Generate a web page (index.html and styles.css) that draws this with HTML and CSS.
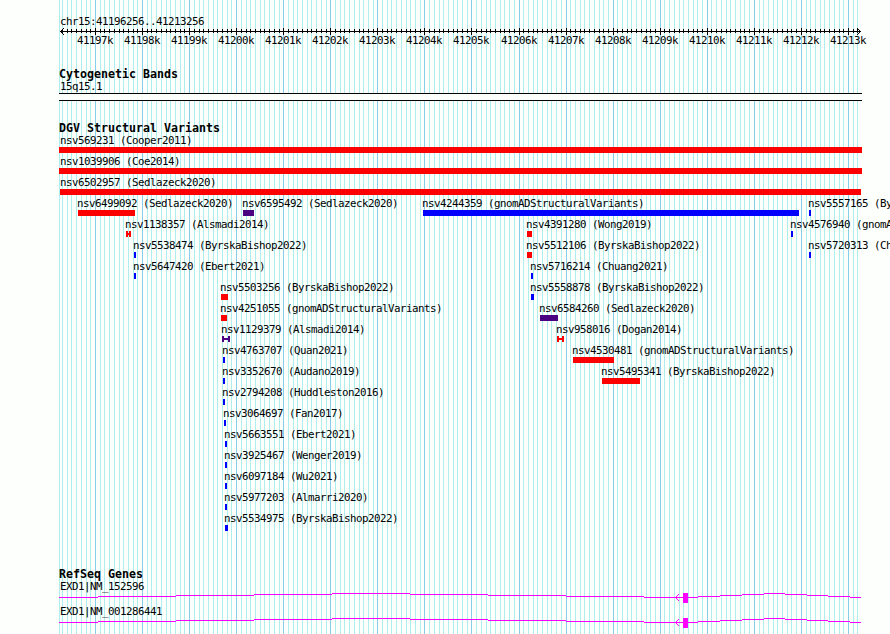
FILE: index.html
```html
<!DOCTYPE html>
<html lang="en">
<head>
<meta charset="utf-8">
<title>chr15:41196256..41213256</title>
<link rel="stylesheet" href="styles.css">
</head>
<body>
<main class="browser">
  <svg class="gridlines" width="890" height="634" shape-rendering="crispEdges" aria-hidden="true"></svg>
  <header class="ruler">
    <div class="region">chr15:41196256..41213256</div>
    <svg class="axis" width="890" height="7" shape-rendering="crispEdges"></svg>
    <div class="ticks"></div>
  </header>
  <section class="track cyto">
    <h2>Cytogenetic Bands</h2>
    <div class="name">15q15.1</div>
    <div class="band"></div>
  </section>
  <section class="track variants">
    <h2>DGV Structural Variants</h2>
    <div class="rows"></div>
  </section>
  <section class="track genes">
    <h2>RefSeq Genes</h2>
    <div class="gene"><div class="name">EXD1|NM_152596</div><svg class="transcript" width="890" height="12" shape-rendering="crispEdges"></svg></div>
    <div class="gene"><div class="name">EXD1|NM_001286441</div><svg class="transcript" width="890" height="12" shape-rendering="crispEdges"></svg></div>
  </section>
</main>
<script src="tracks.js"></script>
</body>
</html>
```
FILE: styles.css
```css
* { box-sizing: border-box; }
body {
  margin: 0;
  background: #fdfffc;
  color: #000;
  font-family: "DejaVu Sans Mono", "Liberation Mono", monospace;
  font-size: 10.8px;
  line-height: 13px;
  letter-spacing: -0.502px;
}
.browser {
  display: grid;
  grid-template-rows: 68px 54px 446px 66px;
  width: 890px;
  height: 634px;
  overflow: hidden;
}
.gridlines { position: absolute; top: 0; left: 0; z-index: -1; }
.minor { fill: #afeeee; }
.major { fill: #87ceeb; }
svg { display: block; }
.ruler { padding-top: 15px; }
.region, .name { padding-left: 60px; white-space: pre; height: 13px; }
.axis { fill: #000; }
.ticks { display: grid; margin-top: -1px; }
.ticks span {
  grid-area: 1 / 1;
  width: 36px;
  margin-left: var(--x);
  white-space: nowrap;
}
h2 {
  margin: 0;
  padding-left: 59px;
  height: 12px;
  font-size: 11.63px;
  line-height: 13px;
  letter-spacing: 0;
  font-weight: bold;
}
.cyto .band {
  height: 8px;
  width: 803px;
  margin-left: 59px;
  background: #fdfffc;
  border-top: 1px solid #000;
  border-bottom: 1px solid #000;
}
.row { display: grid; height: 21px; }
.feature {
  grid-area: 1 / 1;
  margin-left: var(--x);
  display: flex;
  flex-direction: column;
  min-width: 0;
}
.feature .label { height: 13px; margin-left: -1px; white-space: pre; }
.feature.edge .label { margin-left: 1px; }
.feature.start .label { margin-left: 0; }
.bar { width: var(--w); height: 6px; background: currentColor; }
.loss { color: #f00; }
.gain { color: #00f; }
.both { color: #4b0082; }
.span {
  background: linear-gradient(currentColor, currentColor) 0 50% / 100% 2px no-repeat;
  border-left: 2px solid;
  border-right: 2px solid;
}
.gene { height: 25px; }
.gene .name { height: 12px; }
.transcript { fill: #f0f; }
```
FILE: tracks.js
```js
const START = 41196.256;
const SCALE = 800 / 17;
const toX = k => Math.round(60 + (k - START) * SCALE);
const rect = (x, y, w, h, c) =>
  `<rect x="${x}" y="${y}" width="${w}" height="${h}"${c ? ` class="${c}"` : ''}/>`;

let grid = rect(59, 0, 1, 634, 'minor');
let axis = rect(60, 3, 801, 1);
let labels = '';
for (let i = 411963; i <= 412132; i++) {
  const x = toX(i / 10);
  const major = i % 10 === 0;
  grid += rect(x, 0, 1, 634, major ? 'major' : 'minor');
  axis += major ? rect(x, 0, 1, 7) : rect(x, 1, 1, 4);
  if (major) labels += `<span style="--x:${x - 18}px">${i / 10}k</span>`;
}
for (let d = 1; d <= 3; d++) {
  axis += rect(60 + d, 3 - d, 1, 1) + rect(60 + d, 3 + d, 1, 1);
  axis += rect(860 - d, 3 - d, 1, 1) + rect(860 - d, 3 + d, 1, 1);
}
document.querySelector('.gridlines').innerHTML = grid;
document.querySelector('.axis').innerHTML = axis;
document.querySelector('.ticks').innerHTML = labels;

// Each feature: left, width, kind, label, optional modifiers
const rows = [
  [[59, 803, 'loss', 'nsv569231 (Cooper2011)', 'edge']],
  [[59, 803, 'loss', 'nsv1039906 (Coe2014)', 'edge']],
  [[60, 801, 'loss', 'nsv6502957 (Sedlazeck2020)', 'start']],
  [[78, 57, 'loss', 'nsv6499092 (Sedlazeck2020)'], [243, 11, 'both', 'nsv6595492 (Sedlazeck2020)'],
   [423, 376, 'gain', 'nsv4244359 (gnomADStructuralVariants)'], [809, 2, 'gain', 'nsv5557165 (ByrskaBishop2022)']],
  [[126, 5, 'loss', 'nsv1138357 (Alsmadi2014)', '', 'span'], [527, 5, 'loss', 'nsv4391280 (Wong2019)'],
   [791, 2, 'gain', 'nsv4576940 (gnomADStructuralVariants)']],
  [[134, 2, 'gain', 'nsv5538474 (ByrskaBishop2022)'], [527, 5, 'loss', 'nsv5512106 (ByrskaBishop2022)'],
   [809, 2, 'gain', 'nsv5720313 (Chuang2021)']],
  [[134, 2, 'gain', 'nsv5647420 (Ebert2021)'], [531, 2, 'gain', 'nsv5716214 (Chuang2021)']],
  [[221, 7, 'loss', 'nsv5503256 (ByrskaBishop2022)'], [531, 3, 'gain', 'nsv5558878 (ByrskaBishop2022)']],
  [[221, 6, 'loss', 'nsv4251055 (gnomADStructuralVariants)'], [540, 18, 'both', 'nsv6584260 (Sedlazeck2020)']],
  [[222, 8, 'both', 'nsv1129379 (Alsmadi2014)', '', 'span'], [557, 7, 'loss', 'nsv958016 (Dogan2014)', '', 'span']],
  [[223, 2, 'gain', 'nsv4763707 (Quan2021)'], [573, 41, 'loss', 'nsv4530481 (gnomADStructuralVariants)']],
  [[223, 2, 'gain', 'nsv3352670 (Audano2019)'], [602, 38, 'loss', 'nsv5495341 (ByrskaBishop2022)']],
  [[223, 2, 'gain', 'nsv2794208 (Huddleston2016)']],
  [[224, 2, 'gain', 'nsv3064697 (Fan2017)']],
  [[225, 2, 'gain', 'nsv5663551 (Ebert2021)']],
  [[225, 2, 'gain', 'nsv3925467 (Wenger2019)']],
  [[225, 2, 'gain', 'nsv6097184 (Wu2021)']],
  [[225, 2, 'gain', 'nsv5977203 (Almarri2020)']],
  [[225, 3, 'gain', 'nsv5534975 (ByrskaBishop2022)']]
];
document.querySelector('.rows').innerHTML = rows.map(row =>
  '<div class="row">' + row.map(([x, w, kind, label, mod = '', shape = '']) =>
    `<div class="feature ${mod}" style="--x:${x}px;--w:${w}px"><span class="label">${label}</span>` +
    `<span class="bar ${kind} ${shape}"></span></div>`).join('') + '</div>').join('');

// Intron arcs as stepped segments: left, right, height above the baseline
const steps = [
  [59, 98, 0], [98, 176, 1], [176, 254, 2], [254, 332, 3], [332, 410, 4], [410, 488, 3],
  [488, 566, 2], [566, 644, 1], [644, 698, 0], [698, 720, 1], [720, 742, 2], [742, 764, 3],
  [764, 785, 4], [785, 807, 3], [807, 828, 2], [828, 850, 1], [850, 861, 0]
];
let gene = steps.map(([a, b, h]) => rect(a, 5 - h, b - a, 1)).join('') + rect(683, 1, 5, 10);
for (let d = 1; d <= 3; d++) {
  gene += rect(675 + d, 5 - d, 1, 1) + rect(675 + d, 5 + d, 1, 1);
}
document.querySelectorAll('.transcript').forEach(svg => { svg.innerHTML = gene; });
```
